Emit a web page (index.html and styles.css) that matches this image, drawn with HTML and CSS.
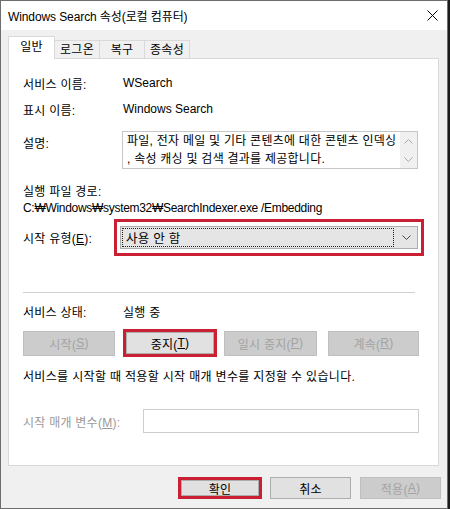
FILE: index.html
```html
<!DOCTYPE html>
<html lang="ko">
<head>
<meta charset="utf-8">
<title>Windows Search 속성(로컬 컴퓨터)</title>
<link rel="stylesheet" href="styles.css">
</head>
<body>
<div class="window">
  <div class="titlebar">
    <span class="title">Windows Search 속성(로컬 컴퓨터)</span>
    <svg class="close" width="11" height="11" viewBox="0 0 11 11"><path d="M0.5 0.5 L10.5 10.5 M10.5 0.5 L0.5 10.5" stroke="#000" stroke-width="1" fill="none"/></svg>
  </div>
  <div class="content">
    <div class="tabs">
      <div class="tab active">일반</div>
      <div class="tab">로그온</div>
      <div class="tab">복구</div>
      <div class="tab">종속성</div>
    </div>
    <div class="panel">
      <div class="row r1"><span class="label">서비스 이름:</span><span class="latin">WSearch</span></div>
      <div class="row r2"><span class="label">표시 이름:</span><span class="latin">Windows Search</span></div>
      <div class="row r3">
        <span class="label top">설명:</span>
        <div class="desc">
          <div class="desc-text">
            <div>파일, 전자 메일 및 기타 콘텐츠에 대한 콘텐츠 인덱싱</div>
            <div>, 속성 캐싱 및 검색 결과를 제공합니다.</div>
          </div>
          <div class="vscroll">
            <svg width="9" height="5" viewBox="0 0 9 5"><path d="M0.5 4.5 L4.5 0.5 L8.5 4.5" stroke="#a8a8a8" fill="none"/></svg>
            <svg width="9" height="5" viewBox="0 0 9 5"><path d="M0.5 0.5 L4.5 4.5 L8.5 0.5" stroke="#a8a8a8" fill="none"/></svg>
          </div>
        </div>
      </div>
      <div class="line r4">실행 파일 경로:</div>
      <div class="line latin path">C:₩Windows₩system32₩SearchIndexer.exe /Embedding</div>
      <div class="row r6">
        <span class="label">시작 유형(<u>E</u>):</span>
        <div class="hl combo-hl">
          <div class="combo">
            <div class="focus">사용 안 함</div>
            <svg class="chev" width="9" height="5" viewBox="0 0 9 5"><path d="M0.5 0.5 L4.5 4.5 L8.5 0.5" stroke="#444" fill="none"/></svg>
          </div>
        </div>
      </div>
      <div class="sep"></div>
      <div class="line r8"><span class="label">서비스 상태:</span><span>실행 중</span></div>
      <div class="btnrow">
        <div class="btn dis w92">시작(<u>S</u>)</div>
        <div class="hl btn-hl"><div class="btn inner">중지(<u>T</u>)</div></div>
        <div class="btn dis w93">일시 중지(<u>P</u>)</div>
        <div class="btn dis w91">계속(<u>R</u>)</div>
      </div>
      <div class="line r10 wide-ls">서비스를 시작할 때 적용할 시작 매개 변수를 지정할 수 있습니다.</div>
      <div class="row r11">
        <span class="label wide disabled">시작 매개 변수(<u>M</u>):</span>
        <div class="input"></div>
      </div>
    </div>
    <div class="footer">
      <div class="hl ok-hl"><div class="btn inner">확인</div></div>
      <div class="btn fbtn">취소</div>
      <div class="btn fbtn dis">적용(<u>A</u>)</div>
    </div>
  </div>
</div>
</body>
</html>
```
FILE: styles.css
```css
html, body {
  margin: 0;
  padding: 0;
  background: #1b1b1b;
}
body {
  width: 450px;
  height: 509px;
  overflow: hidden;
  font-family: "Liberation Sans", "Noto Sans CJK KR", sans-serif;
  font-size: 12px;
  letter-spacing: 0.25px;
  color: #000;
}
u { text-decoration: underline; text-underline-offset: 1px; }
.latin { letter-spacing: 0; }
.path { letter-spacing: -0.3px; }
.wide-ls { letter-spacing: 0.33px; }
.window {
  width: 448px;
  height: 509px;
  box-sizing: border-box;
  border: 1px solid #6e6e6e;
  background: #f0f0f0;
  display: flex;
  flex-direction: column;
}
.titlebar {
  height: 29px;
  flex: none;
  background: #fff;
  display: flex;
  align-items: center;
  justify-content: space-between;
  padding: 0 9px 0 7px;
}
.title { font-size: 12px; letter-spacing: -0.1px; }
.close { display: block; }
.content {
  padding: 6px 0 0 7px;
  display: flex;
  flex-direction: column;
}
.tabs {
  display: flex;
  align-items: flex-end;
  height: 22px;
  position: relative;
  z-index: 1;
}
.tab {
  width: 45px;
  height: 18px;
  box-sizing: border-box;
  border: 1px solid #d9d9d9;
  border-bottom: none;
  border-left: none;
  background: #f0f0f0;
  display: flex;
  align-items: center;
  justify-content: center;
  line-height: 16px;
}
.tab.active {
  width: 47px;
  height: 23px;
  margin-bottom: -1px;
  background: #fff;
  border-left: 1px solid #d9d9d9;
  padding-bottom: 2px;
}
.panel {
  width: 431px;
  height: 408px;
  box-sizing: border-box;
  background: #fff;
  border: 1px solid #d9d9d9;
  padding-left: 14px;
  display: flex;
  flex-direction: column;
}
.row {
  display: flex;
  align-items: center;
  height: 20px;
  flex: none;
}
.line {
  display: flex;
  align-items: center;
  height: 18px;
  flex: none;
  white-space: nowrap;
}
.label { width: 100px; flex: none; white-space: nowrap; }
.label.wide { width: 120px; }
.label.top { align-self: flex-start; padding-top: 5px; line-height: 16px; }
.disabled { color: #9a9a9a; }
.r1 { margin-top: 14px; }
.r2 { margin-top: 6px; }
.r3 { margin-top: 12px; height: 38px; align-items: flex-start; }
.desc {
  width: 296px;
  height: 38px;
  box-sizing: border-box;
  margin-left: -1px;
  border: 1px solid #c6c6c6;
  display: flex;
}
.desc-text {
  flex: 1;
  padding: 0 0 0 4px;
  line-height: 18px;
  white-space: nowrap;
  overflow: hidden;
}
.vscroll {
  width: 17px;
  flex: none;
  background: #f0f0f0;
  display: flex;
  flex-direction: column;
  align-items: center;
  justify-content: space-between;
  padding: 7px 0 6px;
  box-sizing: border-box;
}
.vscroll svg { display: block; }
.r4 { margin-top: 12px; }
.r6 { margin-top: 2px; height: 37px; }
.hl {
  box-sizing: border-box;
  border: 3px solid #c92133;
  flex: none;
}
.combo-hl {
  width: 310px;
  height: 37px;
  margin-left: -9px;
  padding: 4px 3px;
}
.combo {
  height: 100%;
  box-sizing: border-box;
  background: #e5e5e5;
  border: 1px solid #adadad;
  display: flex;
  align-items: center;
  padding: 1px 6px 1px 1px;
}
.focus {
  flex: 1;
  height: 100%;
  box-sizing: border-box;
  border: 1px dotted #222;
  display: flex;
  align-items: center;
  padding-left: 3px;
  font-size: 12.5px;
}
.chev { margin-left: 8px; display: block; }
.sep {
  width: 392px;
  height: 1px;
  background: #cfcfcf;
  margin-top: 36px;
  flex: none;
}
.r8 { margin-top: 9px; }
.btnrow {
  display: flex;
  align-items: center;
  height: 28px;
  margin-top: 9px;
  flex: none;
}
.btn {
  box-sizing: border-box;
  height: 25px;
  border: 1px solid #adadad;
  background: #e1e1e1;
  display: flex;
  align-items: center;
  justify-content: center;
  white-space: nowrap;
  flex: none;
}
.btn.dis {
  background: #cccccc;
  border-color: #bfbfbf;
  color: #a3a3a3;
}
.w92 { width: 92px; }
.w93 { width: 93px; margin-left: 7px; }
.w91 { width: 91px; margin-left: 11px; }
.btn-hl {
  width: 94px;
  height: 28px;
  margin-left: 8px;
}
.btn.inner {
  width: 100%;
  height: 100%;
}
.r10 { margin-top: 9px; }
.r11 { margin-top: 25px; height: 24px; }
.input {
  width: 276px;
  height: 24px;
  box-sizing: border-box;
  border: 1px solid #cdcdcd;
  background: #fff;
}
.footer {
  display: flex;
  justify-content: flex-end;
  align-items: flex-start;
  margin-top: 11px;
  padding-right: 6px;
}
.ok-hl {
  width: 84px;
  height: 22px;
}
.fbtn {
  width: 81px;
  height: 22px;
}
.footer .fbtn { margin-left: 8px; }
.footer .fbtn + .fbtn { margin-left: 9px; }
```
